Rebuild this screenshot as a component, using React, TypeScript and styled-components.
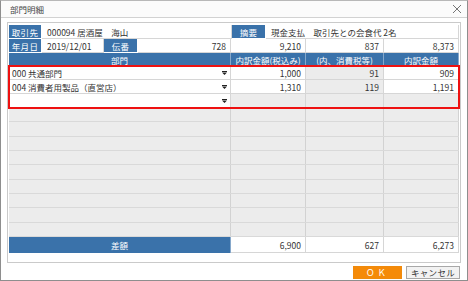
import React from "react";
import styled, { createGlobalStyle } from "styled-components";

const GlobalStyle = createGlobalStyle`
  html, body {
    margin: 0;
    padding: 0;
    background: #ffffff;
  }
  * {
    box-sizing: border-box;
  }
`;

const BLUE = "#3a72aa";
const FONT = `"Noto Sans CJK JP", "Noto Sans", sans-serif`;

const Window = styled.div`
  width: 468px;
  height: 281px;
  border: 1px solid #8e8e8e;
  border-top-color: #b8b8b8;
  background: #ffffff;
  display: flex;
  flex-direction: column;
  font-family: ${FONT};
  font-size: 8.5px;
  color: #333333;
`;

const TitleBar = styled.div`
  height: 17px;
  flex: none;
  display: flex;
  align-items: center;
  justify-content: space-between;
  padding: 0 4px 0 9px;
  border-bottom: 1px solid #d2d2d2;
  background: #fbfbfb;
  font-size: 8.5px;
  color: #444444;
`;

const CloseButton = styled.button`
  width: 12px;
  height: 12px;
  border: none;
  background: none;
  padding: 0;
  display: flex;
  align-items: center;
  justify-content: center;
`;

const Body = styled.div`
  padding: 4px 6px 0 6px;
`;

const Panel = styled.div`
  border: 1px solid #cacaca;
  padding: 2px 1px 9px 1px;
  display: flex;
  flex-direction: column;
`;

const Row = styled.div<{ $cols: string; $h?: number }>`
  display: grid;
  grid-template-columns: ${({ $cols }) => $cols};
  height: ${({ $h }) => $h ?? 14}px;
`;

const Label = styled.div`
  background: ${BLUE};
  color: #ffffff;
  border-right: 1px solid #ffffff;
  border-bottom: 1px solid #ffffff;
  display: flex;
  align-items: center;
  justify-content: center;
  letter-spacing: 0.3px;
`;

const Value = styled.div<{ $right?: boolean; $gray?: boolean }>`
  background: ${({ $gray }) => ($gray ? "#ececec" : "#ffffff")};
  border-right: 1px solid #d6d6d6;
  border-bottom: 1px solid #d6d6d6;
  display: flex;
  align-items: center;
  justify-content: ${({ $right }) => ($right ? "flex-end" : "flex-start")};
  padding: ${({ $right }) => ($right ? "0 4px 0 0" : "0 0 0 5px")};
  white-space: nowrap;
  overflow: hidden;
`;

const HeadCell = styled.div`
  background: ${BLUE};
  color: #ffffff;
  border-right: 1px solid #86a8cb;
  display: flex;
  align-items: center;
  justify-content: center;
  white-space: nowrap;
`;

const Selected = styled.div`
  outline: 2px solid #ee1111;
  outline-offset: -1px;
  position: relative;
  z-index: 1;
`;

const SelectCell = styled(Value)`
  justify-content: space-between;
  padding: 0 3px 0 3px;
`;

const Filler = styled.div`
  height: 129px;
  display: flex;
  flex-direction: column;
`;

const FillRow = styled.div`
  flex: 1;
  display: grid;
  grid-template-columns: 222px 75px 78px 1fr;
  border-bottom: 1px solid #d9d9d9;
  background: #ececec;
`;

const FillCell = styled.div`
  border-right: 1px solid #d2d2d2;
`;

const ButtonBar = styled.div`
  flex: 1;
  display: flex;
  justify-content: flex-end;
  align-items: flex-start;
  gap: 4px;
  padding: 3px 7px 0 0;
`;

const DialogButton = styled.button<{ $primary?: boolean }>`
  height: 13px;
  width: ${({ $primary }) => ($primary ? 49 : 54)}px;
  padding: 0;
  font-family: ${FONT};
  font-size: 8.5px;
  line-height: 1;
  border: 1px solid ${({ $primary }) => ($primary ? "#f08a0c" : "#a8a8a8")};
  background: ${({ $primary }) => ($primary ? "#f58a08" : "#f2f2f2")};
  color: ${({ $primary }) => ($primary ? "#ffffff" : "#333333")};
  letter-spacing: ${({ $primary }) => ($primary ? "3px" : "0.3px")};
  display: flex;
  align-items: center;
  justify-content: center;
`;

const Arrow = () => (
  <svg width="5" height="4" viewBox="0 0 5 4">
    <rect x="0" y="0" width="5" height="1" fill="#222" />
    <path d="M0 1.5 L5 1.5 L2.5 4 Z" fill="#222" />
  </svg>
);

const CloseIcon = () => (
  <svg width="10" height="10" viewBox="0 0 10 10">
    <path d="M1 1 L9 9 M9 1 L1 9" stroke="#666" strokeWidth="0.9" />
  </svg>
);

const TABLE_COLS = "222px 75px 78px 1fr";

const lines = [
  { dept: "000 共通部門", total: "1,000", tax: "91", net: "909" },
  { dept: "004 消費者用製品（直営店）", total: "1,310", tax: "119", net: "1,191" },
  { dept: "", total: "", tax: "", net: "" },
];

const App = () => {
  return (
    <Window>
      <GlobalStyle />
      <TitleBar>
        <span>部門明細</span>
        <CloseButton>
          <CloseIcon />
        </CloseButton>
      </TitleBar>
      <Body>
        <Panel>
          <Row $cols="33px 190px 34px 1fr">
            <Label>取引先</Label>
            <Value>000094 居酒屋　海山</Value>
            <Label>摘要</Label>
            <Value>現金支払　取引先との会食代 2名</Value>
          </Row>
          <Row $cols="33px 62px 34px 93px 75px 78px 1fr">
            <Label>年月日</Label>
            <Value>2019/12/01</Value>
            <Label>伝番</Label>
            <Value $right>728</Value>
            <Value $right>9,210</Value>
            <Value $right>837</Value>
            <Value $right>8,373</Value>
          </Row>
          <Row $cols={TABLE_COLS} $h={13}>
            <HeadCell>部門</HeadCell>
            <HeadCell>内訳金額(税込み)</HeadCell>
            <HeadCell>(内、消費税等)</HeadCell>
            <HeadCell>内訳金額</HeadCell>
          </Row>
          <Selected>
            {lines.map((l, i) => (
              <Row key={i} $cols={TABLE_COLS}>
                <SelectCell>
                  <span>{l.dept}</span>
                  <Arrow />
                </SelectCell>
                <Value $right $gray={!l.dept}>
                  {l.total}
                </Value>
                <Value $right $gray>
                  {l.tax}
                </Value>
                <Value $right $gray={!l.dept}>
                  {l.net}
                </Value>
              </Row>
            ))}
          </Selected>
          <Filler>
            {Array.from({ length: 9 }).map((_, i) => (
              <FillRow key={i}>
                <FillCell />
                <FillCell />
                <FillCell />
                <FillCell />
              </FillRow>
            ))}
          </Filler>
          <Row $cols={TABLE_COLS} $h={16}>
            <HeadCell>差額</HeadCell>
            <Value $right>6,900</Value>
            <Value $right>627</Value>
            <Value $right>6,273</Value>
          </Row>
        </Panel>
      </Body>
      <ButtonBar>
        <DialogButton $primary>ＯＫ</DialogButton>
        <DialogButton>キャンセル</DialogButton>
      </ButtonBar>
    </Window>
  );
};

export default App;
